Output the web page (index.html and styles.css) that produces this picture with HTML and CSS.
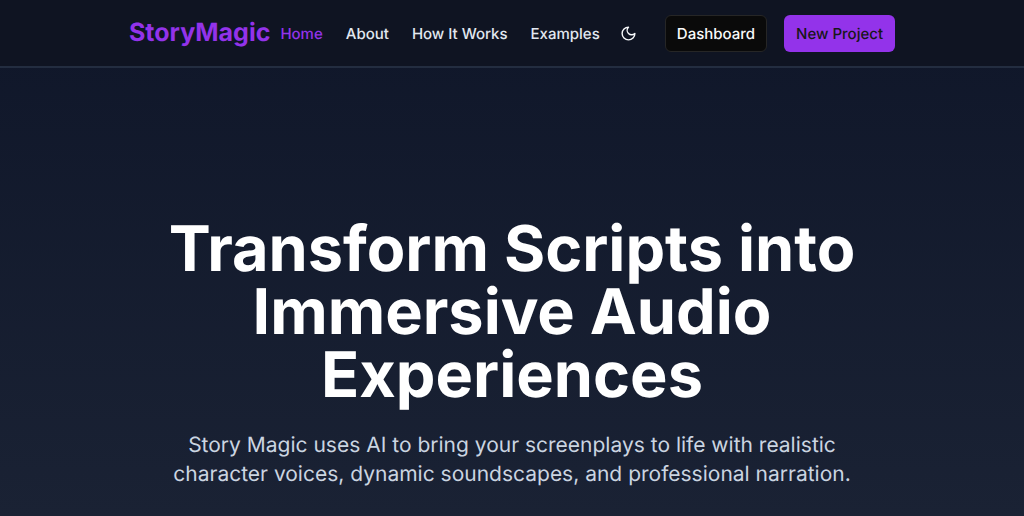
FILE: index.html
```html
<!DOCTYPE html>
<html lang="en">
<head>
<meta charset="utf-8">
<meta name="viewport" content="width=device-width, initial-scale=1">
<title>StoryMagic</title>
<link rel="stylesheet" href="styles.css">
</head>
<body>
<header class="site-header">
  <div class="header-inner">
    <a class="brand" href="#">StoryMagic</a>
    <nav class="nav" aria-label="Main">
      <a class="nav-link active" href="#">Home</a>
      <a class="nav-link" href="#about">About</a>
      <a class="nav-link" href="#how">How It Works</a>
      <a class="nav-link" href="#examples">Examples</a>
    </nav>
    <button class="theme-toggle" type="button" aria-label="Toggle theme">
      <svg viewBox="0 0 24 24" width="17" height="17" aria-hidden="true"><path fill="none" stroke="currentColor" stroke-width="2" stroke-linecap="round" stroke-linejoin="round" d="M12 3a6 6 0 0 0 9 9 9 9 0 1 1-9-9Z"/></svg>
    </button>
    <div class="actions">
      <button class="btn btn-dark" type="button">Dashboard</button>
      <button class="btn btn-primary" type="button">New Project</button>
    </div>
  </div>
</header>
<main class="hero">
  <h1 class="hero-title">Transform Scripts into Immersive Audio Experiences</h1>
  <p class="hero-text">Story Magic uses AI to bring your screenplays to life with realistic character voices, dynamic soundscapes, and professional narration.</p>
</main>
</body>
</html>
```
FILE: styles.css
```css
* { box-sizing: border-box; }
body {
  margin: 0;
  min-height: 100vh;
  font-family: Inter, "Liberation Sans", sans-serif;
  text-rendering: geometricPrecision;
  color: #e2e8f0;
  background: linear-gradient(#0f1629, #1a2234);
}
.site-header { border-bottom: 2px solid #232d40; background: #0f1422; }
.header-inner {
  display: flex;
  align-items: center;
  max-width: 768px;
  margin: 0 auto;
  padding: 15px 1px 14px;
}
.brand { color: #9333ea; font-size: 25px; font-weight: 700; line-height: 37px; text-decoration: none; }
.nav { display: flex; gap: 23px; margin-left: 10px; }
.nav-link { color: #e2e8f0; font-size: 15px; font-weight: 500; line-height: 21px; text-decoration: none; white-space: nowrap; }
.active { color: #9333ea; }
.theme-toggle {
  display: flex;
  margin-left: 20px;
  padding: 0;
  border: 0;
  background: none;
  color: #f8fafc;
}
.actions { display: flex; gap: 17px; margin-left: auto; }
.btn {
  height: 37px;
  padding: 0 11px;
  border: 1px solid transparent;
  border-radius: 6px;
  font: 500 15px/21px Inter, "Liberation Sans", sans-serif;
  text-rendering: inherit;
  white-space: nowrap;
}
.btn-dark { background: #0a0a0a; border-color: #262626; color: #fafafa; }
.btn-primary { background: #9333ea; color: #171717; }
.hero { max-width: 720px; margin: 0 auto; padding: 150px 16px 20px; text-align: center; }
.hero-title { margin: 0; color: #fff; font-size: 63px; font-weight: 700; line-height: 63px; }
.hero-text { margin: 24px 0 0; color: #cbd5e1; font-size: 21px; line-height: 29px; }
```
